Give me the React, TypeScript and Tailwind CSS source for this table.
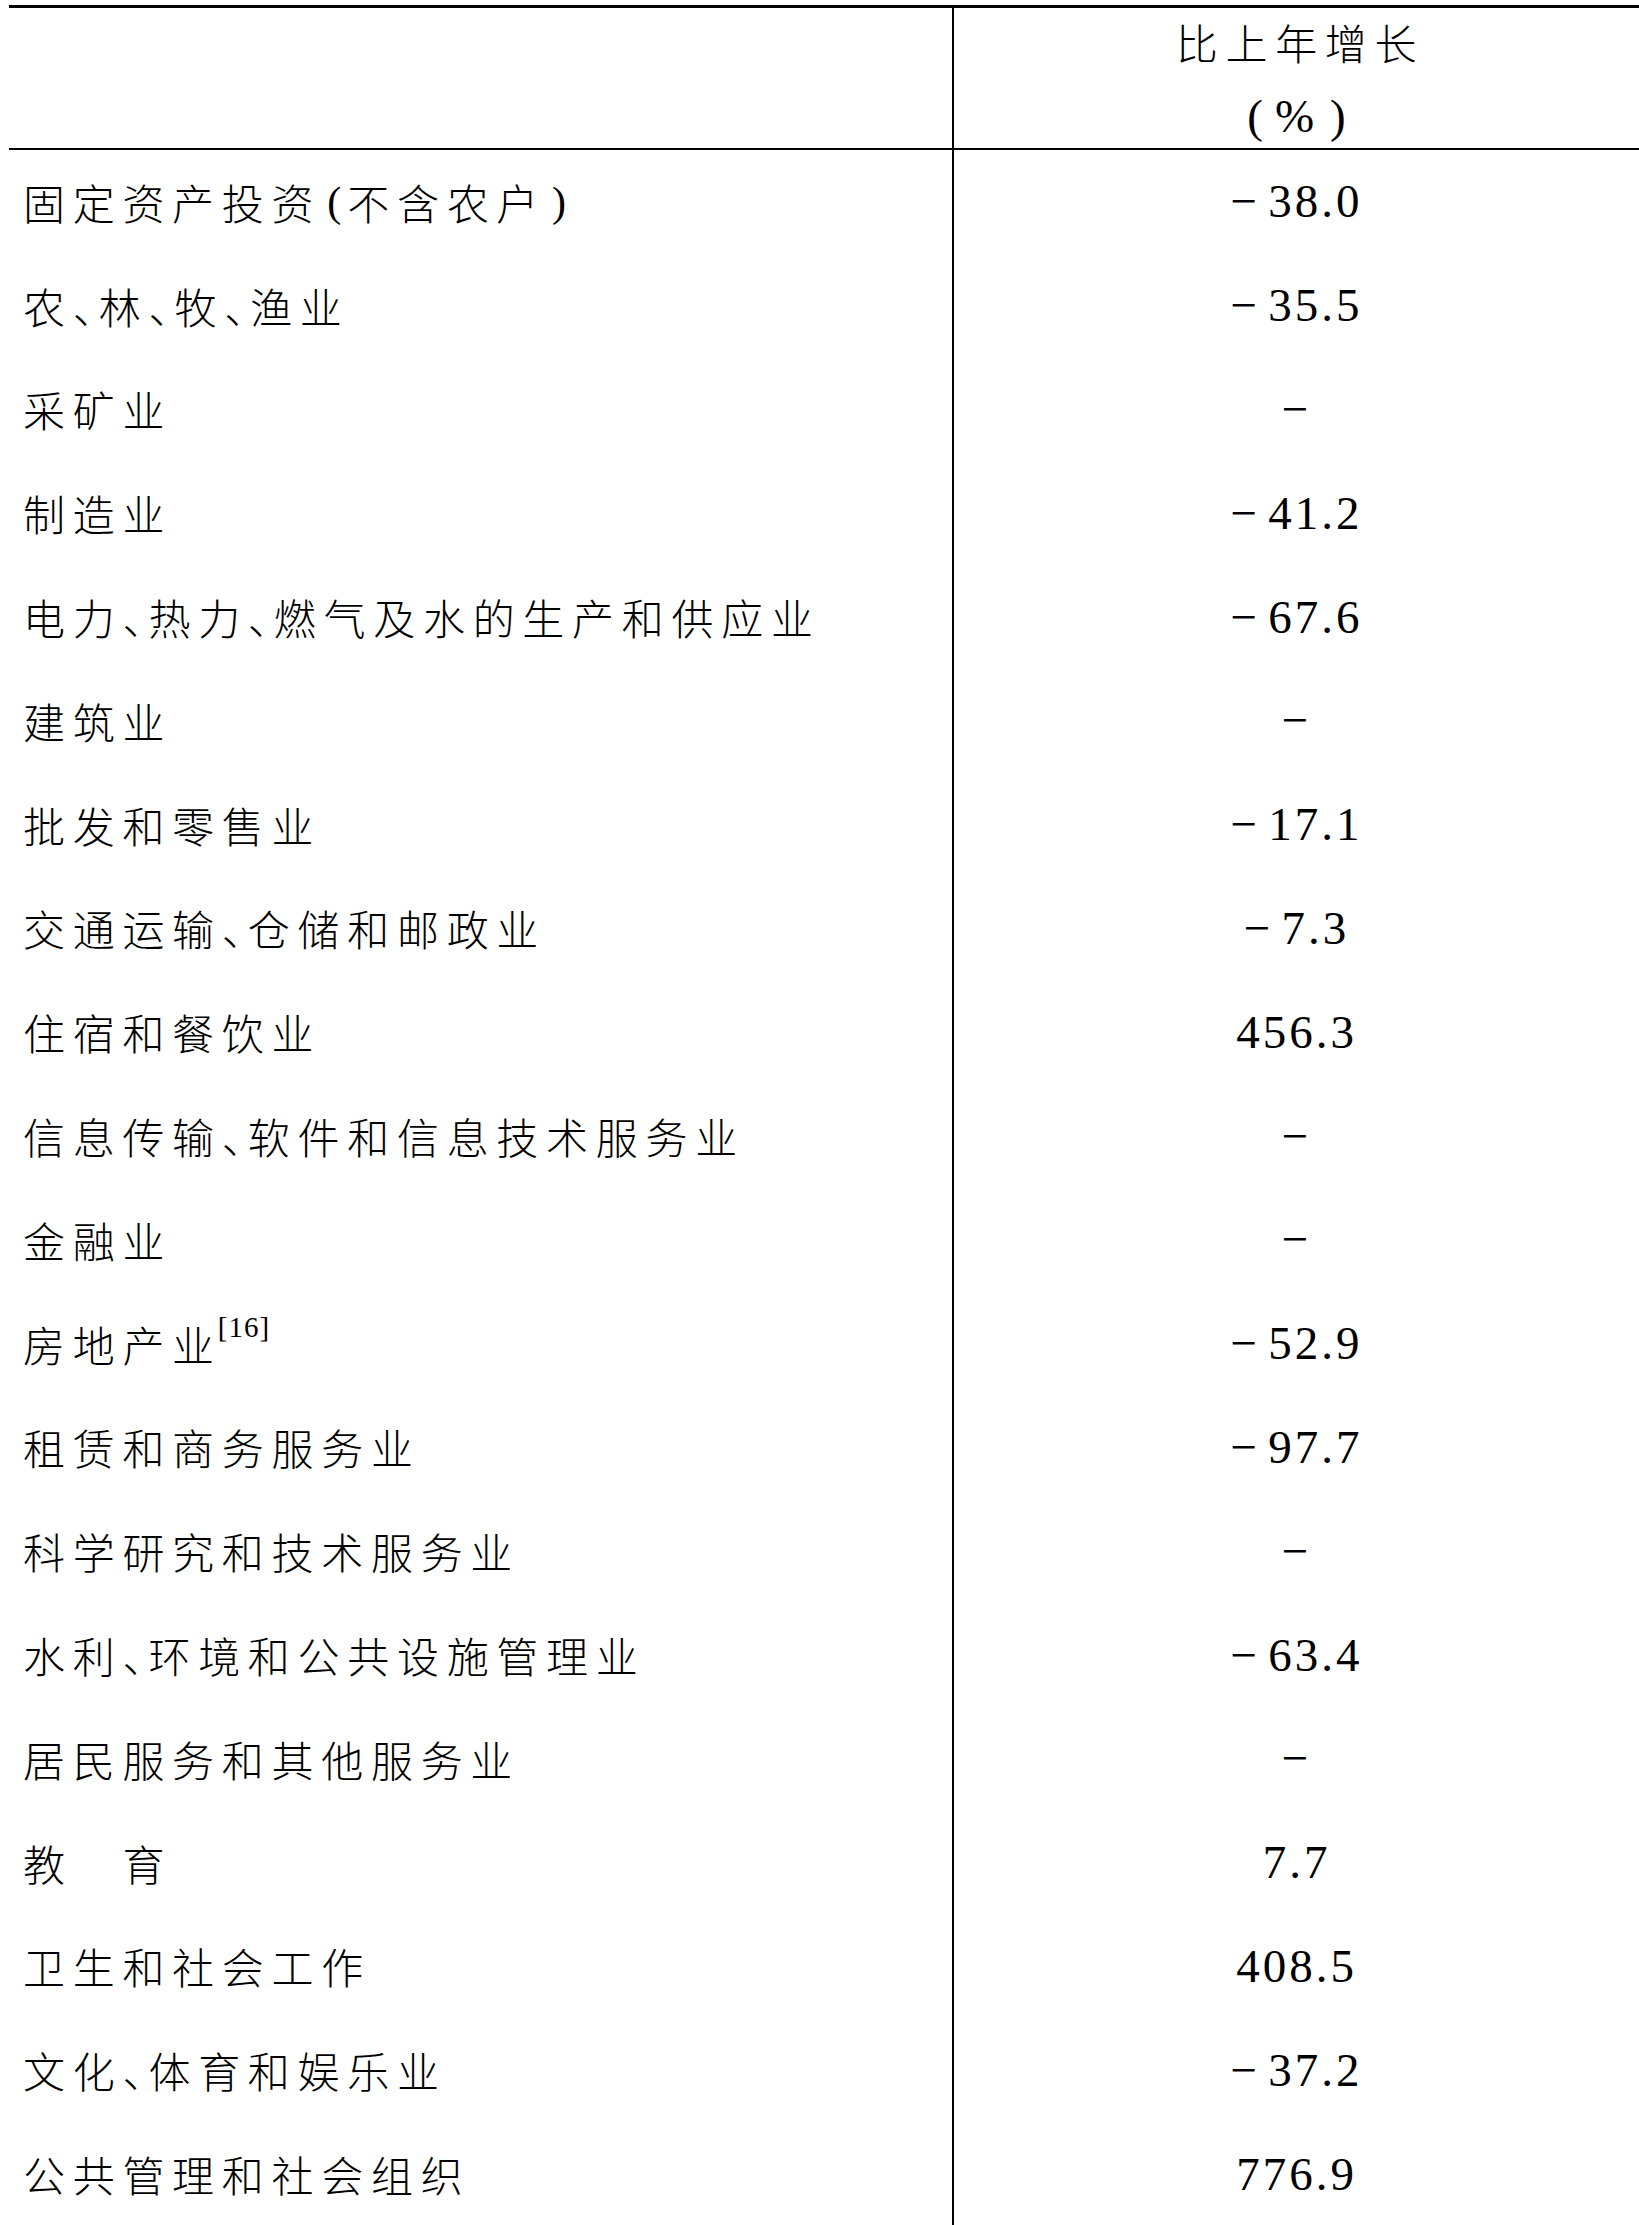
import React from "react";

type Row = { label: string; value: string; note?: string };

const rows: Row[] = [
  { label: "固定资产投资(不含农户)", value: "−38.0" },
  { label: "农、林、牧、渔业", value: "−35.5" },
  { label: "采矿业", value: "−" },
  { label: "制造业", value: "−41.2" },
  { label: "电力、热力、燃气及水的生产和供应业", value: "−67.6" },
  { label: "建筑业", value: "−" },
  { label: "批发和零售业", value: "−17.1" },
  { label: "交通运输、仓储和邮政业", value: "−7.3" },
  { label: "住宿和餐饮业", value: "456.3" },
  { label: "信息传输、软件和信息技术服务业", value: "−" },
  { label: "金融业", value: "−" },
  { label: "房地产业", value: "−52.9", note: "[16]" },
  { label: "租赁和商务服务业", value: "−97.7" },
  { label: "科学研究和技术服务业", value: "−" },
  { label: "水利、环境和公共设施管理业", value: "−63.4" },
  { label: "居民服务和其他服务业", value: "−" },
  { label: "教　育", value: "7.7" },
  { label: "卫生和社会工作", value: "408.5" },
  { label: "文化、体育和娱乐业", value: "−37.2" },
  { label: "公共管理和社会组织", value: "776.9" },
];

// 、 and brackets are set half width in the original
function Label({ text }: { text: string }) {
  return (
    <>
      {Array.from(text).map((ch, i) => {
        if (ch === "、") {
          return (
            <span key={i} className="tracking-[-16px]">
              {ch}
            </span>
          );
        }
        if (ch === "(" || ch === ")") {
          return (
            <span
              key={i}
              className="inline-block w-[26px] text-center tracking-normal font-['Liberation_Serif',serif]"
            >
              {ch}
            </span>
          );
        }
        return <span key={i}>{ch}</span>;
      })}
    </>
  );
}

function Value({ value }: { value: string }) {
  if (value === "−") return <span>−</span>;
  const neg = value.startsWith("−");
  const num = neg ? value.slice(1) : value;
  return (
    <span>
      {neg && <span className="mr-[8px]">−</span>}
      {num}
    </span>
  );
}

export default function App() {
  return (
    <div className="bg-white w-[1639px] h-[2225px] overflow-hidden pt-[5px] pl-[9px] text-black">
      <div className="border-t-[3px] border-black">
        {/* header */}
        <div className="flex h-[142px] border-b-2 border-black">
          <div className="w-[945px] border-r-2 border-black" />
          <div className="flex-1 flex flex-col items-center pt-[10px] gap-[26px]">
            <div className="text-[42px] leading-[48px] tracking-[7.7px] font-light font-['Noto_Sans_CJK_SC',sans-serif] pl-[7px]">
              比上年增长
            </div>
            <div className="flex items-center gap-[12px] text-[47px] leading-[48px] font-['Liberation_Serif',serif]">
              <span>(</span>
              <span>%</span>
              <span className="ml-[4px]">)</span>
            </div>
          </div>
        </div>

        {/* body */}
        {rows.map((r) => (
          <div key={r.label} className="flex h-[103.8px]">
            <div className="w-[945px] border-r-2 border-black flex items-center pl-[14px] text-[42px] leading-none tracking-[7.7px] font-light font-['Noto_Sans_CJK_SC',sans-serif] whitespace-nowrap">
              <Label text={r.label} />
              {r.note && (
                <span className="relative -top-[16px] ml-[-4px] text-[29px] leading-none tracking-[1px] font-['Liberation_Serif',serif]">
                  {r.note}
                </span>
              )}
            </div>
            <div className="flex-1 flex items-center justify-center text-[47px] leading-none tracking-[3px] font-['Liberation_Serif',serif]">
              <Value value={r.value} />
            </div>
          </div>
        ))}
      </div>
    </div>
  );
}
